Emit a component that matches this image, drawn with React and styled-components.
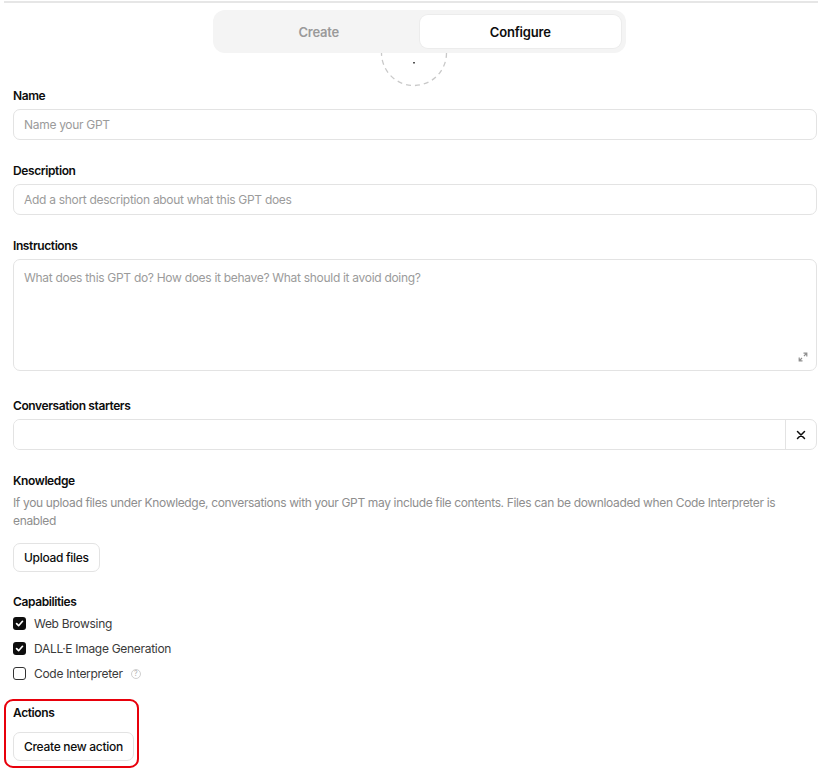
import styled, { createGlobalStyle } from "styled-components";

const GlobalStyle = createGlobalStyle`
    body {
        margin: 0;
        background: #ffffff;
        font-family: Inter, "Liberation Sans", Arial, sans-serif;
        color: #0d0d0d;
    }
`

const fields = [
    { label: "Name", placeholder: "Name your GPT" },
    { label: "Description", placeholder: "Add a short description about what this GPT does" },
]

const capabilities = [
    { label: "Web Browsing", checked: true },
    { label: "DALL·E Image Generation", checked: true },
    { label: "Code Interpreter", checked: false, help: true },
]

const App = () => {
    return <>
    <GlobalStyle />
    <TopRule />
    <Page>
        <Header>
            <Tabs>
                <Tab>Create</Tab>
                <Tab $active>Configure</Tab>
            </Tabs>
            <Avatar>
                <svg width="68" height="68" viewBox="0 0 68 68">
                    <circle cx="34" cy="34" r="32.5" fill="none" stroke="#c9c9c9" strokeWidth="1.3" strokeDasharray="5 4" />
                    <rect x="33" y="43" width="2" height="1.5" fill="#555" />
                </svg>
            </Avatar>
        </Header>

        {fields.map((f, i) => (
            <Field key={f.label} $gap={i === 0 ? "0px" : undefined}>
                <Label>{f.label}</Label>
                <Input placeholder={f.placeholder} />
            </Field>
        ))}

        <Field>
            <Label>Instructions</Label>
            <TextBox>
                <TextArea placeholder="What does this GPT do? How does it behave? What should it avoid doing?" />
                <ExpandIcon>
                    <svg width="10" height="10" viewBox="0 0 10 10">
                        <path d="M5.5 1.2h3.3v3.3M8.8 1.2L6 4" fill="none" stroke="#8f8f8f" strokeWidth="1.2" />
                        <path d="M4.5 8.8H1.2V5.5M1.2 8.8L4 6" fill="none" stroke="#8f8f8f" strokeWidth="1.2" />
                    </svg>
                </ExpandIcon>
            </TextBox>
        </Field>

        <Field $gap="26px">
            <Label>Conversation starters</Label>
            <StarterRow>
                <StarterInput />
                <ClearButton>
                    <svg width="10" height="10" viewBox="0 0 10 10">
                        <path d="M1.5 1.5l7 7M8.5 1.5l-7 7" stroke="#0d0d0d" strokeWidth="1.5" strokeLinecap="round" />
                    </svg>
                </ClearButton>
            </StarterRow>
        </Field>

        <Field>
            <Label>Knowledge</Label>
            <Hint>If you upload files under Knowledge, conversations with your GPT may include file contents. Files can be downloaded when Code Interpreter is enabled</Hint>
            <Button $top="13px">Upload files</Button>
        </Field>

        <Field $gap="21px">
            <Label>Capabilities</Label>
            <CheckList>
                {capabilities.map(c => (
                    <CheckRow key={c.label}>
                        <Box $checked={c.checked}>
                            {c.checked && <svg width="9" height="9" viewBox="0 0 9 9">
                                <path d="M1.6 4.7l2 2 3.9-4.4" fill="none" stroke="#fff" strokeWidth="1.7" strokeLinecap="round" strokeLinejoin="round" />
                            </svg>}
                        </Box>
                        <CheckLabel>{c.label}</CheckLabel>
                        {c.help && <Help>?</Help>}
                    </CheckRow>
                ))}
            </CheckList>
        </Field>

        <ActionsBox>
            <Label>Actions</Label>
            <Button $top="6px">Create new action</Button>
        </ActionsBox>
    </Page>
    </>
}

export default App

const TopRule = styled.div`
    height: 2px;
    margin: 1px 0 0 4px;
    background-color: #e6e6e6;
`

const Page = styled.div`
    padding: 0 1px 0 13px;
    display: flex;
    flex-direction: column;
`

const Header = styled.div`
    display: flex;
    flex-direction: column;
    align-items: center;
    padding-top: 7px;
    padding-left: 9px;
`

const Tabs = styled.div`
    position: relative;
    z-index: 1;
    display: grid;
    grid-template-columns: 1fr 1fr;
    width: 403px;
    height: 33px;
    padding: 5px;
    border-radius: 12px;
    background-color: #f4f4f4;
`

const Tab = styled.div`
    display: flex;
    align-items: center;
    justify-content: center;
    border-radius: 8px;
    font-size: 13px;
    font-weight: 600;
    letter-spacing: -0.2px;
    color: ${p => p.$active ? "#0d0d0d" : "#9a9a9a"};
    background-color: ${p => p.$active ? "#ffffff" : "transparent"};
    box-shadow: ${p => p.$active ? "0 0 0 1px #ececec" : "none"};
`

const Avatar = styled.div`
    margin-top: -34px;
    margin-left: -12px;
    width: 68px;
    height: 68px;
    svg { display: block; }
`

const Field = styled.div`
    display: flex;
    flex-direction: column;
    margin-top: ${p => p.$gap || "22px"};
`

const Label = styled.div`
    font-size: 12px;
    font-weight: 600;
    line-height: 18px;
    letter-spacing: -0.4px;
    margin-bottom: 4px;
    color: #0d0d0d;
`

const Input = styled.input`
    box-sizing: border-box;
    height: 31px;
    width: 100%;
    padding: 0 10px;
    border: 1px solid #e3e3e3;
    border-radius: 7px;
    font-family: inherit;
    font-size: 12px;
    letter-spacing: -0.3px;
    color: #0d0d0d;
    outline: none;
    &::placeholder { color: #9b9b9b; }
`

const TextBox = styled.div`
    position: relative;
    height: 112px;
`

const TextArea = styled.textarea`
    box-sizing: border-box;
    display: block;
    width: 100%;
    height: 100%;
    padding: 10px 10px;
    border: 1px solid #e3e3e3;
    border-radius: 7px;
    font-family: inherit;
    font-size: 12px;
    letter-spacing: -0.3px;
    line-height: 16px;
    resize: none;
    outline: none;
    &::placeholder { color: #9b9b9b; }
`

const ExpandIcon = styled.div`
    position: absolute;
    right: 9px;
    bottom: 9px;
    width: 10px;
    height: 10px;
    svg { display: block; }
`

const StarterRow = styled.div`
    display: flex;
    height: 31px;
    box-sizing: border-box;
    border: 1px solid #e3e3e3;
    border-radius: 7px;
    overflow: hidden;
`

const StarterInput = styled.input`
    flex: 1;
    border: none;
    outline: none;
    padding: 0 10px;
    font-family: inherit;
    font-size: 12px;
`

const ClearButton = styled.div`
    width: 30px;
    display: flex;
    align-items: center;
    justify-content: center;
    border-left: 1px solid #e3e3e3;
`

const Hint = styled.p`
    margin: 0;
    font-size: 12px;
    line-height: 18px;
    letter-spacing: -0.35px;
    color: #8e8e8e;
    padding-right: 30px;
`

const Button = styled.button`
    align-self: flex-start;
    margin-top: ${p => p.$top || "0"};
    height: 29px;
    padding: 0 10px;
    background: #ffffff;
    border: 1px solid #e3e3e3;
    border-radius: 7px;
    font-family: inherit;
    font-size: 12px;
    letter-spacing: -0.3px;
    font-weight: 500;
    color: #0d0d0d;
`

const CheckList = styled.div`
    display: flex;
    flex-direction: column;
    margin-top: -4px;
`

const CheckRow = styled.label`
    display: flex;
    align-items: center;
    height: 25px;
`

const Box = styled.span`
    box-sizing: border-box;
    width: 13px;
    height: 13px;
    border-radius: 3px;
    display: flex;
    align-items: center;
    justify-content: center;
    background-color: ${p => p.$checked ? "#0d0d0d" : "#ffffff"};
    border: ${p => p.$checked ? "none" : "1.4px solid #333"};
    svg { display: block; }
`

const CheckLabel = styled.span`
    margin-left: 8px;
    font-size: 12px;
    letter-spacing: -0.3px;
    color: #3a3a3a;
`

const Help = styled.span`
    margin-left: 8px;
    width: 10px;
    height: 10px;
    box-sizing: border-box;
    border: 1px solid #d0d0d0;
    border-radius: 50%;
    font-size: 7px;
    line-height: 8px;
    text-align: center;
    color: #b0b0b0;
`

const ActionsBox = styled.div`
    align-self: flex-start;
    display: flex;
    flex-direction: column;
    margin: 13px 0 0 -9px;
    padding: 3px 3px 5px 7px;
    border: 2px solid #e8000b;
    border-radius: 9px;
`
